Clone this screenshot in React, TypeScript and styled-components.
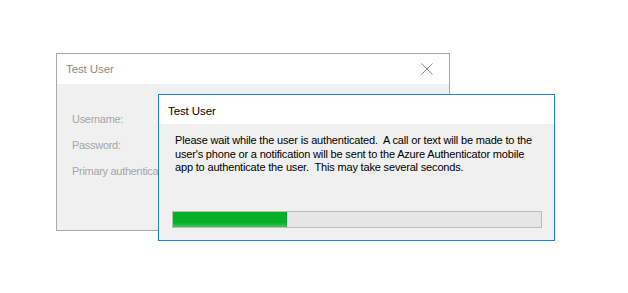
import React from 'react';
import styled, {createGlobalStyle} from 'styled-components';

const GlobalStyle = createGlobalStyle`
    html, body {
        margin: 0;
        padding: 0;
        background: #ffffff;
    }
    body {
        font-family: "Liberation Sans", Arial, sans-serif;
    }
`

const Desktop = styled.div`
    position: relative;
    width: 628px;
    height: 293px;
    overflow: hidden;
    background: #ffffff;
`

const Window = styled.div<{$left: number; $top: number; $width: number; $height: number; $active?: boolean}>`
    position: absolute;
    left: ${p => p.$left}px;
    top: ${p => p.$top}px;
    width: ${p => p.$width}px;
    height: ${p => p.$height}px;
    box-sizing: border-box;
    border: 1px solid ${p => p.$active ? '#1883d7' : '#a9a9a9'};
    background: #f0f0f0;
    display: flex;
    flex-direction: column;
`

const TitleBar = styled.div<{$height: number}>`
    height: ${p => p.$height}px;
    flex: none;
    background: #ffffff;
    display: flex;
    align-items: center;
    justify-content: space-between;
    box-sizing: border-box;
`

const Title = styled.span<{$active?: boolean}>`
    font-size: 11.5px;
    letter-spacing: -0.1px;
    color: ${p => p.$active ? '#000000' : '#8c8c8c'};
    padding-left: 9px;
    padding-top: ${p => p.$active ? '2px' : '0'};
`

const CloseButton = styled.div`
    width: 46px;
    height: 100%;
    display: flex;
    align-items: center;
    justify-content: center;
    margin-right: -1px;
`

const Form = styled.div`
    padding: 27px 0 0 15px;
    display: flex;
    flex-direction: column;
    gap: 10px;
`

const Label = styled.div`
    font-size: 11px;
    letter-spacing: -0.3px;
    line-height: 16px;
    color: #a6a6a6;
    white-space: nowrap;
`

const Body = styled.div`
    flex: 1;
    display: flex;
    flex-direction: column;
    padding: 10px 12px 0 16px;
`

const Message = styled.p`
    margin: 0;
    font-size: 11px;
    letter-spacing: -0.17px;
    line-height: 13.6px;
    color: #000000;
    white-space: pre;
`

const Progress = styled.div`
    margin-top: 36px;
    margin-left: -3px;
    width: 370px;
    height: 17px;
    box-sizing: border-box;
    border: 1px solid #bcbcbc;
    background: #e6e6e6;
`

const ProgressFill = styled.div`
    height: 100%;
    background: linear-gradient(to bottom, #06b025 0%, #06b025 70%, #3cc45a 100%);
`

const CloseIcon = () => (
    <svg width="12" height="12" viewBox="0 0 12 12">
        <path d="M0.5 0.5 L11.5 11.5 M11.5 0.5 L0.5 11.5" stroke="#8c8c8c" strokeWidth="1" fill="none" />
    </svg>
)

export default function App() {
    const progress = 114 / 368
    return <>
        <GlobalStyle />
        <Desktop>
            <Window $left={56} $top={53} $width={394} $height={178}>
                <TitleBar $height={30}>
                    <Title>Test User</Title>
                    <CloseButton><CloseIcon /></CloseButton>
                </TitleBar>
                <Form>
                    <Label>Username:</Label>
                    <Label>Password:</Label>
                    <Label>Primary authentication method:</Label>
                </Form>
            </Window>
            <Window $left={158} $top={94} $width={397} $height={147} $active>
                <TitleBar $height={29}>
                    <Title $active>Test User</Title>
                </TitleBar>
                <Body>
                    <Message>{`Please wait while the user is authenticated.  A call or text will be made to the
user's phone or a notification will be sent to the Azure Authenticator mobile
app to authenticate the user.  This may take several seconds.`}</Message>
                    <Progress>
                        <ProgressFill style={{width: `${progress * 100}%`}} />
                    </Progress>
                </Body>
            </Window>
        </Desktop>
    </>
}
